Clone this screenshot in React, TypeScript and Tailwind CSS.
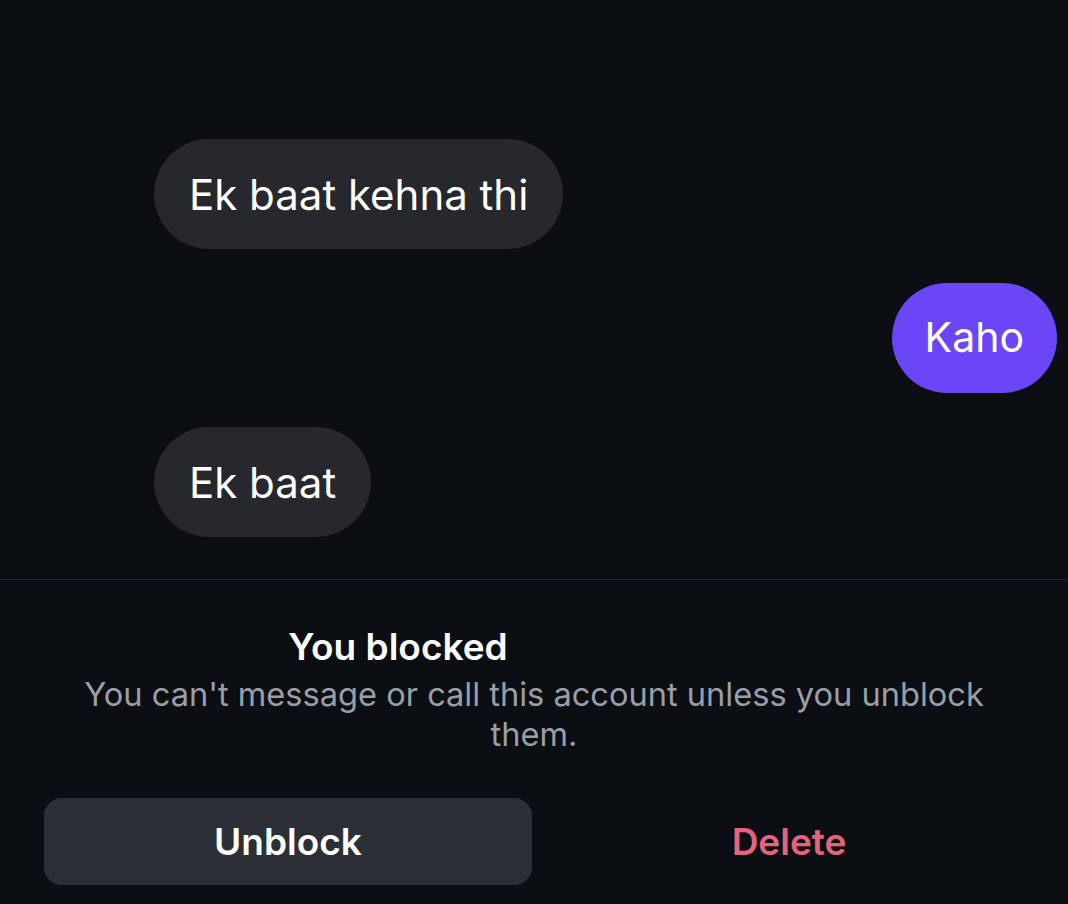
export default function App() {
  return (
    <div className="w-[1068px] h-[904px] overflow-hidden bg-[#0b0e13] text-white font-['Inter','Noto_Sans',sans-serif] flex flex-col">
      {/* Messages */}
      <div className="flex flex-col pt-[139px] pr-[11px] pl-[154px] h-[579px]">
        <div className="self-start h-[110px] rounded-full bg-[#26282d] px-[35px] flex items-center text-[42px]">
          Ek baat kehna thi
        </div>
        <div className="self-end mt-[34px] h-[110px] rounded-full bg-[#6b46f6] px-[33px] flex items-center text-[41px]">
          Kaho
        </div>
        <div className="self-start mt-[34px] h-[110px] rounded-full bg-[#26282d] px-[35px] flex items-center text-[42px]">
          Ek baat
        </div>
      </div>

      <div className="h-px bg-[#1f2228]" />

      {/* Blocked notice */}
      <div className="flex flex-col items-center pt-[44px]">
        <div className="mr-[272px] text-[37px] font-semibold leading-[46px]">You blocked</div>
        <p className="mt-[4px] w-[960px] text-center text-[32.6px] leading-[40px] text-[#9a9ea6]">
          You can't message or call this account unless you unblock them.
        </p>
      </div>

      <div className="mt-[44px] flex pl-[44px] gap-[13px]">
        <button className="w-[488px] h-[87px] rounded-[18px] bg-[#2b2f36] text-[37px] font-semibold">
          Unblock
        </button>
        <button className="w-[488px] h-[87px] text-[37px] font-semibold text-[#e5637c]">
          Delete
        </button>
      </div>
    </div>
  );
}
